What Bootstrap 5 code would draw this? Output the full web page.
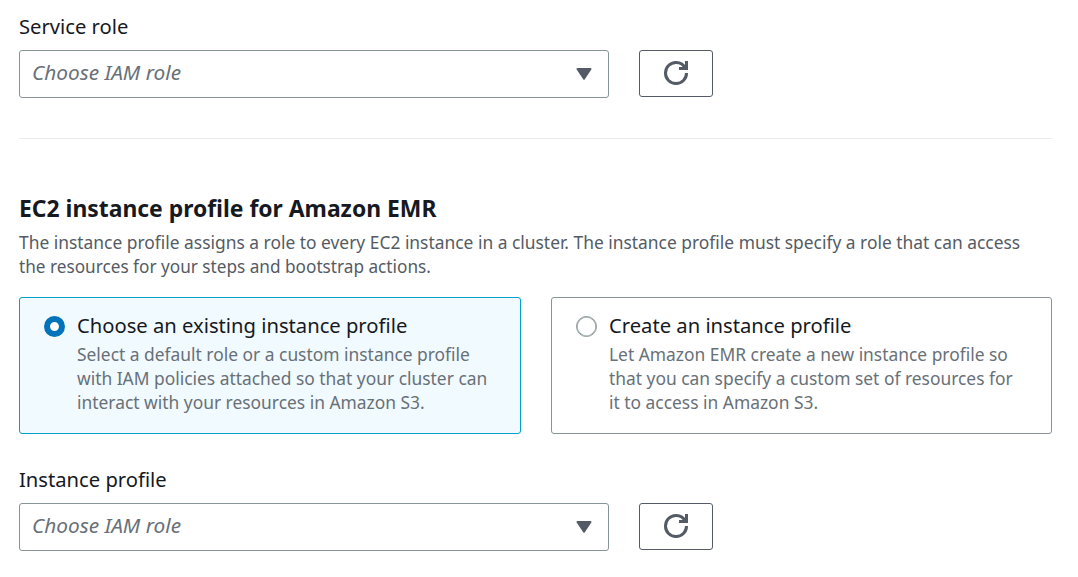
<!DOCTYPE html>
<html lang="en">
<head>
<meta charset="utf-8">
<meta name="viewport" content="width=device-width, initial-scale=1">
<title>EC2 instance profile</title>
<link href="https://cdn.jsdelivr.net/npm/bootstrap@5.3.0/dist/css/bootstrap.min.css" rel="stylesheet">
<style>
body{font-family:"Noto Sans","Open Sans",sans-serif;color:#16191f;background:#fff}
.page{padding:11px 26px 0 19px}
.field-label{font-size:20.2px;line-height:30px;margin-bottom:9px}
.picker-row{gap:30px}
.picker{width:590px;height:48px;border:1px solid #879596;border-radius:3px;padding:0 16px 0 12px;background:#fff;color:#687078;font-size:20.8px;line-height:42px;font-style:italic}
.caret{width:16px;height:12px;margin-top:17px;fill:#545b64;stroke:#545b64;stroke-width:2;stroke-linejoin:round}
.reload{width:74px;height:47px;border:1px solid #545b64;border-radius:3px;padding:10px 0 0;background:#fff}
.reload svg{width:24px;height:24px;fill:none;stroke:#545b64;stroke-width:2}
.divider{height:1px;background:#eaeded;margin:40px 0 55px}
.section-title{font-size:22.9px;line-height:30px;font-weight:700;margin:0 0 6px}
.desc{font-size:17.4px;line-height:24px;color:#545b64;margin:0 0 18px}
.desc-end{font-size:17.2px}
.tiles{display:grid;grid-template-columns:502px 501px;gap:30px;margin-bottom:30px}
.tile{height:137px;gap:12px;border:1px solid #879596;border-radius:3px;padding:12px 0 0 24px;white-space:nowrap}
.tile.chosen{border-color:#00a1c9;background:#f1faff}
.tile input{appearance:none;flex:none;width:21px;height:21px;margin:6px 0 0;border:1px solid #879596;box-shadow:inset 0 0 0 .6px #879596;border-radius:50%;background:#fff}
.tile input:checked{border:6px solid #0073bb;box-shadow:none}
.tile-title{font-size:20.2px;line-height:30px}
.tile-text{font-size:17.4px;line-height:24px;color:#687078;margin:2px 0 0}
</style>
</head>
<body>
<main class="page">
  <div class="field-label">Service role</div>
  <div class="picker-row d-flex">
    <div class="picker d-flex justify-content-between" role="combobox" aria-label="Service role">
      <span>Choose IAM role</span>
      <svg class="caret" viewBox="0 0 16 12"><path d="M1.5 1h13L8 10.7z"/></svg>
    </div>
    <button class="reload d-flex justify-content-center" type="button" aria-label="Refresh">
      <svg viewBox="0 0 16 16"><path d="M10 5h5V0"/><path d="M15 8a6.957 6.957 0 0 1-7 7 6.957 6.957 0 0 1-7-7 6.957 6.957 0 0 1 7-7 6.87 6.87 0 0 1 6.3 4"/></svg>
    </button>
  </div>

  <div class="divider"></div>

  <h2 class="section-title">EC2 instance profile for Amazon EMR</h2>
  <p class="desc text-nowrap">The instance profile assigns a role to every EC2 instance in a cluster. The instance profile must specify a role that can access<br><span class="desc-end">the resources for your steps and bootstrap actions.</span></p>

  <div class="tiles">
    <label class="tile chosen d-flex">
      <input type="radio" name="profile" checked>
      <div>
        <div class="tile-title">Choose an existing instance profile</div>
        <p class="tile-text">Select a default role or a custom instance profile<br>with IAM policies attached so that your cluster can<br>interact with your resources in Amazon S3.</p>
      </div>
    </label>
    <label class="tile d-flex">
      <input type="radio" name="profile">
      <div>
        <div class="tile-title">Create an instance profile</div>
        <p class="tile-text">Let Amazon EMR create a new instance profile so<br>that you can specify a custom set of resources for<br>it to access in Amazon S3.</p>
      </div>
    </label>
  </div>

  <div class="field-label">Instance profile</div>
  <div class="picker-row d-flex">
    <div class="picker d-flex justify-content-between" role="combobox" aria-label="Instance profile">
      <span>Choose IAM role</span>
      <svg class="caret" viewBox="0 0 16 12"><path d="M1.5 1h13L8 10.7z"/></svg>
    </div>
    <button class="reload d-flex justify-content-center" type="button" aria-label="Refresh">
      <svg viewBox="0 0 16 16"><path d="M10 5h5V0"/><path d="M15 8a6.957 6.957 0 0 1-7 7 6.957 6.957 0 0 1-7-7 6.957 6.957 0 0 1 7-7 6.87 6.87 0 0 1 6.3 4"/></svg>
    </button>
  </div>
</main>
<script src="https://cdn.jsdelivr.net/npm/bootstrap@5.3.0/dist/js/bootstrap.bundle.min.js"></script>
</body>
</html>
